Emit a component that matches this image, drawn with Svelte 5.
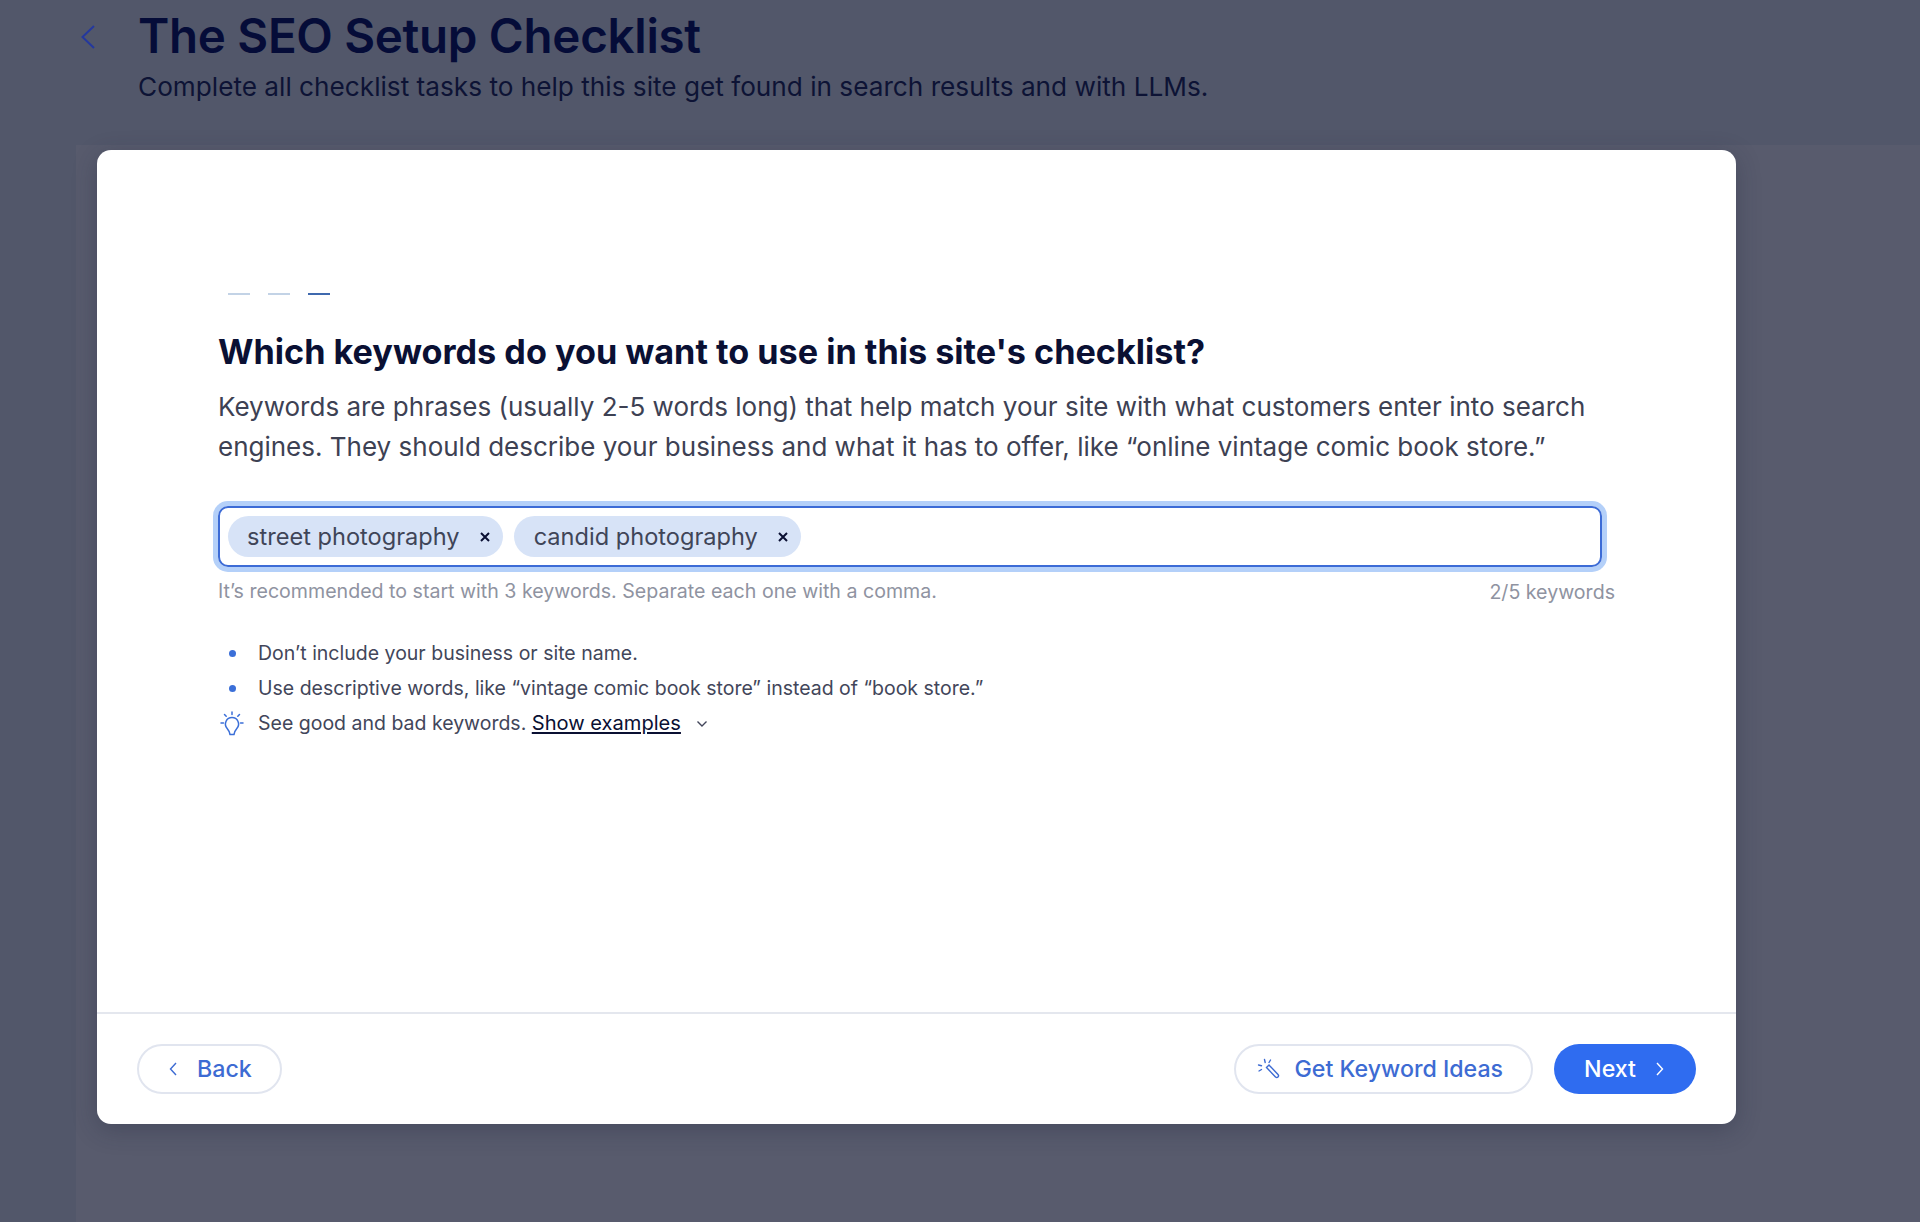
<script lang="ts">
  const tips = [
    "Don’t include your business or site name.",
    "Use descriptive words, like “vintage comic book store” instead of “book store.”",
  ];
  let keywords = $state(["street photography", "candid photography"]);
  const MAX_KEYWORDS = 5;

  function removeKeyword(word: string) {
    keywords = keywords.filter((k) => k !== word);
  }
</script>

<div class="page">
  <header class="top">
    <button type="button" class="top-back" aria-label="Back">
      <svg viewBox="0 0 16 24" width="16" height="24" fill="none" stroke="currentColor" stroke-width="2">
        <path d="M14 1 2.5 12 14 23" />
      </svg>
    </button>
    <div>
      <h1>The SEO Setup Checklist</h1>
      <p class="sub">Complete all checklist tasks to help this site get found in search results and with LLMs.</p>
    </div>
  </header>

  <section class="card">
    <div class="body">
      <div class="steps">
        <span class="step"></span>
        <span class="step"></span>
        <span class="step on"></span>
      </div>

      <h2>Which keywords do you want to use in this site's checklist?</h2>
      <p class="lead">
        Keywords are phrases (usually 2-5 words long) that help match your site with what customers enter into search
        engines. They should describe your business and what it has to offer, like “online vintage comic book store.”
      </p>

      <div class="input">
        {#each keywords as word}
          <span class="chip">
            {word}
            <button type="button" class="chip-x" aria-label="Remove {word}" onclick={() => removeKeyword(word)}>
              <svg viewBox="0 0 12 12" width="12" height="12" fill="none" stroke="currentColor" stroke-width="2">
                <path d="M2 2l8 8M10 2l-8 8" />
              </svg>
            </button>
          </span>
        {/each}
      </div>

      <div class="hint">
        <span>It’s recommended to start with 3 keywords. Separate each one with a comma.</span>
        <span class="count">{keywords.length}/{MAX_KEYWORDS} keywords</span>
      </div>

      <ul class="tips">
        {#each tips as tip}
          <li><span class="mark"><span class="dot"></span></span>{tip}</li>
        {/each}
        <li>
          <span class="mark">
            <svg viewBox="0 0 26 26" width="26" height="26" fill="none" stroke="#3b6fd8" stroke-width="1.5" stroke-linecap="round" stroke-linejoin="round">
              <path d="M13 6.500a6.500 6.500 0 0 0-5 10.700c1.300 1.500 2.500 3.500 3 6.300h4c.5-2.800 1.700-4.800 3-6.300A6.500 6.500 0 0 0 13 6.500Z" />
              <path d="M13 1v2.500M5.500 3.500l1.700 1.800M20.500 3.500l-1.700 1.800M2 12h2.500M21.500 12H24" />
            </svg>
          </span>
          See good and bad keywords.&nbsp;<a href="#examples">Show examples</a>
          <svg class="caret" viewBox="0 0 12 8" width="12" height="8" fill="none" stroke="currentColor" stroke-width="1.4">
            <path d="M1.500 1.500 6 6l4.500-4.500" />
          </svg>
        </li>
      </ul>
    </div>

    <footer class="foot">
      <button type="button" class="btn ghost back">
        <svg viewBox="0 0 8 14" width="8" height="14" fill="none" stroke="currentColor" stroke-width="1.4">
          <path d="M7 1 1.500 7 7 13" />
        </svg>
        Back
      </button>
      <div class="foot-right">
        <button type="button" class="btn ghost ideas">
          <svg viewBox="0 0 24 24" width="24" height="24" fill="none" stroke="currentColor" stroke-width="1.4" stroke-linecap="round">
            <path d="M9.500 10.500l2.500-2.500 9 9.500c.8.900.7 1.800 0 2.500-.7.700-1.700.7-2.500 0Z" />
            <path d="M7.500 2.500l.7 3M1.500 8l3 .7M13.500 3l-1.500 2.500M2 14l2.500-1.500" />
          </svg>
          Get Keyword Ideas
        </button>
        <button type="button" class="btn primary">
          Next
          <svg viewBox="0 0 8 14" width="8" height="14" fill="none" stroke="currentColor" stroke-width="1.4">
            <path d="M1 1l5.500 6L1 13" />
          </svg>
        </button>
      </div>
    </footer>
  </section>
</div>

<style>
  :global(body) {
    margin: 0;
    background: #52576a;
  }

  .page {
    min-height: 1222px;
    box-sizing: border-box;
    padding: 0 184px 0 97px;
    overflow: hidden;
    font-family: Inter, "Liberation Sans", sans-serif;
    background: linear-gradient(#585b6d, #585b6d) 76px 145px / 100% 100% no-repeat, #52576a;
  }

  button {
    font: inherit;
    cursor: pointer;
  }

  .top {
    display: flex;
    gap: 42px;
    height: 150px;
    margin-left: -17px;
  }

  .top-back {
    align-self: flex-start;
    margin-top: 25px;
    padding: 0;
    border: none;
    background: none;
    color: #24389e;
    display: flex;
  }

  h1 {
    margin: 8px 0 0;
    font-size: 47.500px;
    line-height: 56px;
    font-weight: 600;
    letter-spacing: -0.3px;
    color: #050c38;
  }

  .sub {
    margin: 6px 0 0;
    font-size: 26.200px;
    line-height: 34px;
    color: #0d1335;
  }

  .card {
    height: 974px;
    display: flex;
    flex-direction: column;
    background: #fff;
    border-radius: 14px;
    box-shadow: 0 6px 24px rgba(30, 35, 60, 0.3);
  }

  .body {
    flex: 1;
    padding: 143px 121px 0;
  }

  .steps {
    display: flex;
    gap: 18px;
    padding-left: 10px;
  }

  .step {
    width: 22px;
    height: 2px;
    background: #c3d3e6;
  }

  .step.on {
    background: #3f69ae;
  }

  h2 {
    margin: 35px 0 0;
    font-size: 34.200px;
    line-height: 44px;
    font-weight: 700;
    color: #0a1033;
  }

  .lead {
    margin: 13px 0 0;
    font-size: 26px;
    line-height: 40px;
    color: #3d4153;
  }

  .input {
    display: flex;
    gap: 11px;
    box-sizing: border-box;
    width: 1384px;
    height: 61px;
    margin-top: 39px;
    padding: 8px;
    border: 2px solid #3c6bd6;
    border-radius: 10px;
    box-shadow: 0 0 0 5px #b4d0f9;
  }

  .chip {
    display: flex;
    align-items: center;
    gap: 19px;
    height: 41px;
    padding: 0 12px 0 19px;
    border-radius: 21px;
    background: #d7e3f7;
    font-size: 23.600px;
    color: #3f4558;
    white-space: nowrap;
  }

  .chip + .chip {
    padding-left: 20px;
  }

  .chip-x {
    display: flex;
    padding: 0;
    border: none;
    background: none;
    color: #0a1033;
  }

  .hint {
    display: flex;
    justify-content: space-between;
    margin-top: 11px;
    font-size: 19.600px;
    line-height: 26px;
    color: #8f93a1;
  }

  .count {
    margin-top: 1px;
  }

  .tips {
    list-style: none;
    margin: 31px 0 0;
    padding: 0;
    font-size: 19.500px;
    line-height: 35px;
    color: #42465a;
  }

  .tips li {
    display: flex;
    align-items: center;
  }

  .mark {
    display: flex;
    align-items: center;
    justify-content: center;
    width: 28px;
    margin-right: 12px;
  }

  .dot {
    width: 7px;
    height: 7px;
    border-radius: 50%;
    background: #3b6fd8;
  }

  .tips a {
    color: #0a1033;
    font-size: 20.100px;
  }

  .caret {
    margin-left: 15px;
  }

  .foot {
    display: flex;
    justify-content: space-between;
    align-items: center;
    height: 112px;
    padding: 0 40px;
    border-top: 2px solid #e4e7ee;
    box-sizing: border-box;
  }

  .foot-right {
    display: flex;
    gap: 21px;
  }

  .btn {
    display: flex;
    align-items: center;
    gap: 20px;
    height: 50px;
    padding: 0 32px 0 30px;
    border-radius: 25px;
    font-size: 23.200px;
    font-weight: 500;
  }

  .ghost {
    border: 2px solid #e1e5ef;
    background: #fff;
    color: #3d6bd3;
  }

  .back {
    padding: 0 28px 0 30px;
  }

  .ideas {
    gap: 14px;
    padding: 0 28px 0 21px;
  }

  .primary {
    border: none;
    background: #2f6cf0;
    color: #fff;
  }
</style>
